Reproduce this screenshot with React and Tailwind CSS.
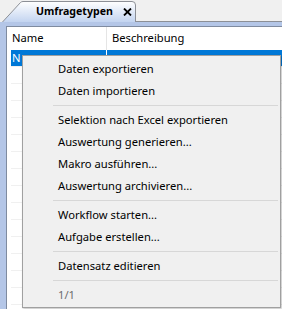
import React from 'react';

const menuItems = [
	{ label: 'Daten exportieren' },
	{ label: 'Daten importieren' },
	{ sep: true },
	{ label: 'Selektion nach Excel exportieren' },
	{ label: 'Auswertung generieren...' },
	{ label: 'Makro ausführen...' },
	{ label: 'Auswertung archivieren...' },
	{ sep: true },
	{ label: 'Workflow starten...' },
	{ label: 'Aufgabe erstellen...' },
	{ sep: true },
	{ label: 'Datensatz editieren' },
	{ sep: true },
	{ label: '1/1', disabled: true },
];

function App() {
	const rows = Array.from({ length: 15 });

	return (
		<div className="relative w-[282px] h-[309px] overflow-hidden bg-[#f0f0f0] font-['Noto_Sans',sans-serif] text-[11.2px] text-black">
			{/* Tab strip */}
			<div className="h-[22px] flex items-end pl-[2px]">
				<div className="relative shrink-0 w-[134px] h-[21px] flex items-center pl-[34px]">
					<svg className="absolute inset-0" width="134" height="21" viewBox="0 0 134 21">
						<defs>
							<linearGradient id="tabg" x1="0" y1="0" x2="0" y2="1">
								<stop offset="0" stopColor="#ffffff" />
								<stop offset="1" stopColor="#c3d4f0" />
							</linearGradient>
						</defs>
						<path d="M0.5 21 L18.5 1.5 Q19.5 0.5 21 0.5 L130 0.5 Q133.5 0.5 133.5 4 L133.5 21" fill="url(#tabg)" stroke="#8c8f96" />
					</svg>
					<span className="relative whitespace-nowrap font-bold text-[10.6px] leading-none">Umfragetypen</span>
					<svg className="relative shrink-0 ml-[10px]" width="9" height="8" viewBox="0 0 9 8">
						<path d="M1 0.5 L8 7.5 M8 0.5 L1 7.5" stroke="#000" strokeWidth="1.8" />
					</svg>
				</div>
				<div className="flex-1 h-px bg-[#8c8f96]" />
			</div>

			{/* Frame */}
			<div className="h-[287px] bg-[#b4c6e7] pl-[6px] pt-[4px]">
				<div className="h-full bg-white border-l border-t border-[#7f8ba0] pl-[4px]">
					{/* Header */}
					<div className="h-[23px] flex items-center">
						<div className="w-[96px] pl-[1px] border-r border-[#e5e5e5] h-full flex items-center">Name</div>
						<div className="pl-[5px]">Beschreibung</div>
					</div>
					{rows.map((_, i) => (
						<div key={i} className={`h-[17px] flex border-b border-[#f0f0f0] ${i === 0 ? 'bg-[#0078d7] text-white' : ''}`}>
							<div className={`w-[96px] h-full pl-[1px] leading-[16px] border-r ${i === 0 ? 'border-white' : 'border-[#f0f0f0]'}`}>{i === 0 ? 'N' : ''}</div>
						</div>
					))}
				</div>
			</div>

			{/* Context menu */}
			<div className="absolute left-[22px] top-[55px] w-[259px] h-[253px] bg-[#f0f0f0] border border-[#a0a0a0] py-[2px] shadow-[1px_1px_2px_rgba(0,0,0,0.25)]">
				{menuItems.map((item, i) =>
					item.sep ? (
						<div key={i} className="h-[7px] flex items-center pl-[30px] pr-[2px]">
							<div className="h-px w-full bg-[#d7d7d7]" />
						</div>
					) : (
						<div key={i} className={`h-[22px] flex items-center pl-[35px] ${item.disabled ? 'text-[#6d6d6d]' : ''}`}>
							{item.label}
						</div>
					)
				)}
			</div>
		</div>
	);
}

export default App;
